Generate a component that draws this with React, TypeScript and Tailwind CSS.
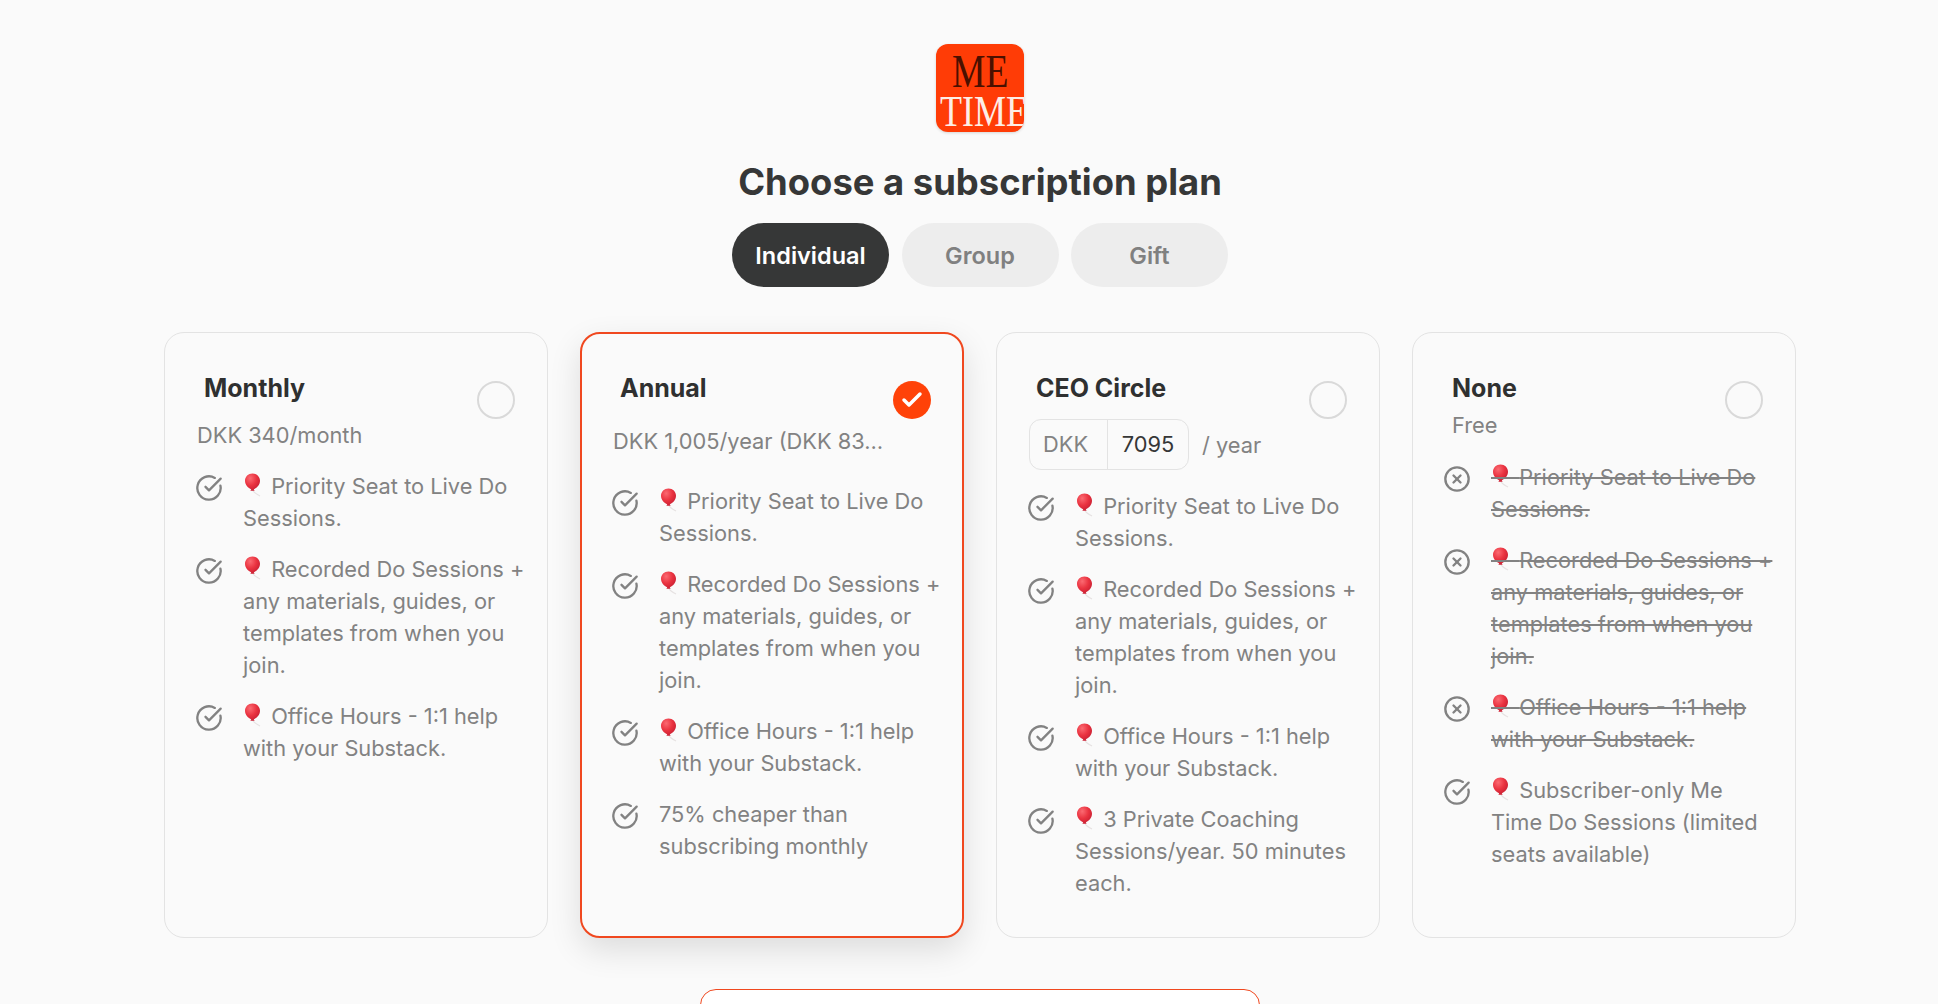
import { CircleCheckBig, CircleX, Check } from 'lucide-react';

const PRIORITY = 'Priority Seat to Live Do Sessions.';
const RECORDED = 'Recorded Do Sessions + any materials, guides, or templates from when you join.';
const HOURS = 'Office Hours - 1:1 help with your Substack.';

interface Feature {
  text: string;
  balloon?: boolean;
  off?: boolean;
}

const base: Feature[] = [
  { text: PRIORITY, balloon: true },
  { text: RECORDED, balloon: true },
  { text: HOURS, balloon: true },
];

// the nbsp holds the emoji's place so that a strike-through runs across it
function Balloon() {
  return (
    <span className="relative tracking-[22px]">
      &nbsp;
      <svg viewBox="0 0 22 26" className="absolute -z-10 left-0 top-[-2px] w-[22px] h-[26px]">
        <defs>
          <radialGradient id="balloon-red" cx="35%" cy="28%" r="75%">
            <stop offset="0%" stopColor="#fb6a72" />
            <stop offset="55%" stopColor="#ea3340" />
            <stop offset="100%" stopColor="#c81f33" />
          </radialGradient>
        </defs>
        <path d="M9.5 19 Q11 22 17 25" fill="none" stroke="#e6e2e2" strokeWidth="1.2" />
        <path d="M9.5 2.5C5.2 2.5 2 5.6 2 9.8c0 4.2 3.4 7.4 6.2 8.4l-.8 1.6h4.2l-.8-1.6c2.8-1 6.2-4.2 6.2-8.4 0-4.2-3.2-7.3-7.5-7.3z" fill="url(#balloon-red)" />
      </svg>
    </span>
  );
}

function FeatureList({ items, className }: { items: Feature[]; className: string }) {
  return (
    <ul className={`flex flex-col gap-[19px] ${className}`}>
      {items.map((item, i) => (
        <li key={i} className="isolate flex gap-[20px] text-[21.8px] leading-[32px] text-[#828282]">
          {item.off ? (
            <CircleX className="w-[28px] h-[28px] -ml-[2px] mt-[4px] shrink-0" strokeWidth={2} />
          ) : (
            <CircleCheckBig className="w-[28px] h-[28px] -ml-[2px] mt-[4px] shrink-0" strokeWidth={2} />
          )}
          <span className={item.off ? 'line-through' : ''}>
            {item.balloon && <Balloon />}
            {item.text}
          </span>
        </li>
      ))}
    </ul>
  );
}

function Radio({ selected }: { selected?: boolean }) {
  if (selected) {
    return (
      <div className="absolute top-[47px] right-[31px] w-[38px] h-[38px] rounded-full bg-[#ff4208] flex items-center justify-center">
        <Check className="w-6 h-6 text-white" strokeWidth={3.5} />
      </div>
    );
  }
  return (
    <div className="absolute top-[48px] right-[32px] w-[38px] h-[38px] rounded-full border-2 border-[#d9d9d9] bg-[#fafafa]" />
  );
}

function Card({
  title,
  selected,
  children,
}: {
  title: string;
  selected?: boolean;
  children: React.ReactNode;
}) {
  return (
    <div
      className={
        selected
          ? 'relative w-[384px] h-[606px] rounded-[20px] border-2 border-[#f0481f] bg-[#fafafa] pt-[38px] pl-[31px] pr-[18px] shadow-[0_12px_32px_rgba(0,0,0,0.12)]'
          : 'relative w-[384px] h-[606px] rounded-[20px] border border-[#e3e3e3] bg-[#fafafa] pt-[39px] pl-[32px] pr-[19px]'
      }
    >
      <h3 className="pl-[7px] text-[25px] leading-[32px] font-bold text-[#2f3030]">{title}</h3>
      <Radio selected={selected} />
      {children}
    </div>
  );
}

export default function App() {
  return (
    <div
      className="h-screen overflow-hidden bg-[#fafafa] flex flex-col items-center pt-[44px] pl-[22px]"
      style={{ fontFamily: 'Inter, "Liberation Sans", sans-serif' }}
    >
      {/* Logo */}
      <div
        className="w-[88px] h-[88px] shrink-0 rounded-[12px] bg-[#ff3c06] overflow-hidden flex flex-col items-center shadow-[0_1px_3px_rgba(0,0,0,0.15)]"
        style={{ fontFamily: '"Liberation Serif", serif' }}
      >
        <span className="mt-[7px] text-[47px] leading-[40px] text-[#4a1000] scale-x-[0.8]">ME</span>
        <span className="text-[45px] leading-[40px] text-[#fdeee6] whitespace-nowrap scale-x-[0.8] ml-[8px]">TIME</span>
      </div>

      <h1 className="mt-[26px] text-[36.4px] leading-[48px] font-bold text-[#363737] whitespace-nowrap">Choose a subscription plan</h1>

      {/* Tabs */}
      <div className="mt-[17px] flex gap-[12.5px]">
        <button className="w-[157px] h-[64px] pt-[1px] rounded-full bg-[#363737] text-white text-[23.5px] font-semibold">Individual</button>
        <button className="w-[157px] h-[64px] pt-[1px] rounded-full bg-[#ededed] text-[#808080] text-[23.5px] font-semibold">Group</button>
        <button className="w-[157px] h-[64px] pt-[1px] rounded-full bg-[#ededed] text-[#808080] text-[23.5px] font-semibold">Gift</button>
      </div>

      {/* Plans */}
      <div className="mt-[45px] flex gap-[32px]">
        <Card title="Monthly">
          <p className="mt-[15px] text-[21.8px] leading-[32px] text-[#828282]">DKK 340/month</p>
          <FeatureList items={base} className="mt-[19px]" />
        </Card>

        <Card title="Annual" selected>
          <p className="mt-[21px] w-[272px] truncate text-[21.8px] leading-[32px] text-[#828282]">DKK 1,005/year (DKK 83.75/month)</p>
          <FeatureList
            items={[...base, { text: '75% cheaper than subscribing monthly' }]}
            className="mt-[28px]"
          />
        </Card>

        <Card title="CEO Circle">
          <div className="mt-[15px] flex items-center gap-[13px]">
            <div className="flex w-[160px] h-[51px] rounded-[12px] border border-[#e3e3e3] text-[21.8px] items-center">
              <span className="w-[78px] h-full pl-[13px] flex items-center border-r border-[#e3e3e3] text-[#828282]">DKK</span>
              <span className="flex-1 text-center text-[#363737]">7095</span>
            </div>
            <span className="pt-[2px] text-[21.8px] text-[#828282]">/ year</span>
          </div>
          <FeatureList
            items={[...base, { text: '3 Private Coaching Sessions/year. 50 minutes each.', balloon: true }]}
            className="mt-[19.5px]"
          />
        </Card>

        <Card title="None">
          <p className="mt-[5px] pl-[7px] text-[21.8px] leading-[32px] text-[#828282]">Free</p>
          <FeatureList
            items={[
              { text: PRIORITY, balloon: true, off: true },
              { text: RECORDED, balloon: true, off: true },
              { text: HOURS, balloon: true, off: true },
              { text: 'Subscriber-only Me Time Do Sessions (limited seats available)', balloon: true },
            ]}
            className="mt-[20px]"
          />
        </Card>
      </div>

      {/* Continue button, cut off by the fold */}
      <div className="mt-[51px] w-[560px] h-[72px] shrink-0 rounded-[16px] border border-[#f0481f] bg-white" />
    </div>
  );
}
